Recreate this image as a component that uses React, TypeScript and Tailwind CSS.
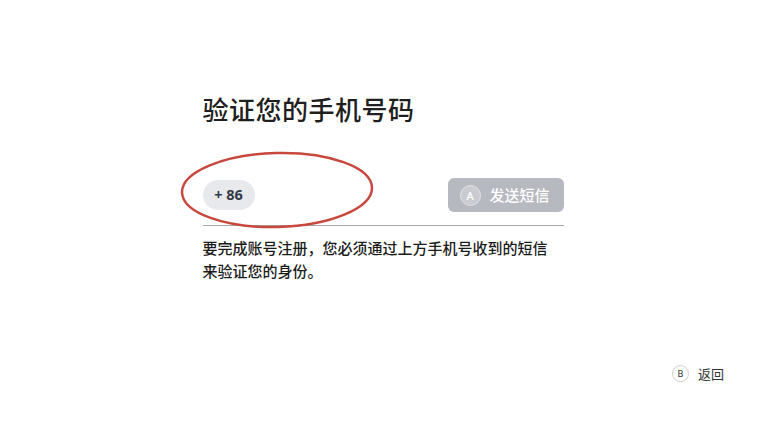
const cjk = { fontFamily: '"Noto Sans CJK SC", "Noto Sans", sans-serif' };

function CircleKey({ letter, className }: { letter: string; className: string }) {
  return (
    <span
      className={`flex items-center justify-center rounded-full leading-none ${className}`}
      style={{ fontFamily: '"Noto Sans", sans-serif' }}
    >
      {letter}
    </span>
  );
}

export default function App() {
  return (
    <div className="relative h-[430px] w-[766px] overflow-hidden bg-white text-[#222]" style={cjk}>
      <div className="mx-auto w-[361px] pt-[89px]">
        <h1 className="text-[26px] font-medium leading-[40px] tracking-[0.5px] text-[#1f1f1f]">验证您的手机号码</h1>

        <div className="mt-[49px] flex items-center justify-between pb-[13px]">
          <div
            className="flex h-[30px] w-[52px] items-center justify-center rounded-full bg-[#e8e9ec] text-[14.5px] font-bold text-[#333a45]"
            style={{ fontFamily: '"Noto Sans", sans-serif' }}
          >
            + 86
          </div>
          <button className="flex h-[34px] w-[116px] items-center gap-[9px] rounded-[6px] bg-[#b7b9c1] pl-[12px] text-[15px] font-medium text-white">
            <CircleKey letter="A" className="h-[21px] w-[21px] border-[1.5px] border-[#e2e3e7] bg-[#c9cbd1] text-[11px] text-white" />
            <span>发送短信</span>
          </button>
        </div>
        <div className="h-px bg-[#a8a8a8]" />

        <p className="mt-[10px] text-[15px] font-medium leading-[23px] text-[#1c1c1c]">
          要完成账号注册，您必须通过上方手机号收到的短信
          <br />
          来验证您的身份。
        </p>
      </div>

      <div className="absolute left-[672px] top-[364px] flex items-center gap-[9px] text-[13px] text-[#333]">
        <CircleKey letter="B" className="h-[17px] w-[17px] border border-[#cfcfcf] text-[9px] text-[#333]" />
        <span>返回</span>
      </div>

      <svg className="pointer-events-none absolute left-0 top-0" width="766" height="430">
        <ellipse
          cx="277"
          cy="190"
          rx="95"
          ry="37"
          transform="rotate(-1.5 277 190)"
          fill="none"
          stroke="#c8483e"
          strokeWidth="2.5"
        />
      </svg>
    </div>
  );
}
